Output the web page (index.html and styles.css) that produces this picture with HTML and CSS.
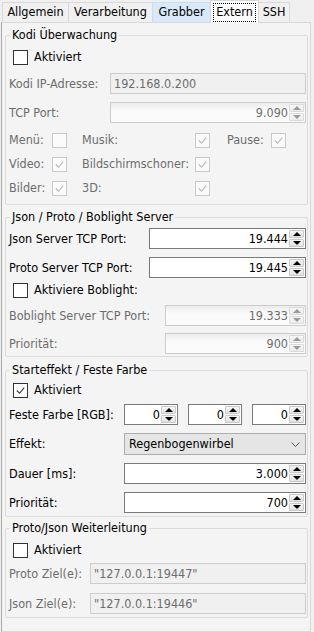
FILE: index.html
```html
<!DOCTYPE html>
<html>
<head>
<meta charset="utf-8">
<link rel="stylesheet" href="styles.css">
</head>
<body>
<div class="tabs">
  <div class="tab tw1">Allgemein</div>
  <div class="tab tw2">Verarbeitung</div>
  <div class="tab tw3 hover">Grabber</div>
  <div class="tab tw4 active"><span class="focus">Extern</span></div>
  <div class="tab tw5">SSH</div>
</div>
<div class="pane">
  <fieldset class="group g1">
    <legend>Kodi Überwachung</legend>
    <div class="check c1"><span class="box"></span><span>Aktiviert</span></div>
    <div class="row m5"><span class="lbl dis w101">Kodi IP-Adresse:</span><span class="edit dis">192.168.0.200</span></div>
    <div class="row m8"><span class="lbl dis w101">TCP Port:</span>
      <span class="spin dis"><span class="val">9.090</span><span class="btns"><span class="btn up"></span><span class="btn down"></span></span></span></div>
    <div class="cbgrid">
      <span class="dis">Menü:</span><span class="box dbox"></span>
      <span class="dis">Musik:</span><span class="box dbox"><svg viewBox="0 0 14 14"><polyline points="3,7 6,10 11,4"/></svg></span>
      <span class="dis">Pause:</span><span class="box dbox"><svg viewBox="0 0 14 14"><polyline points="3,7 6,10 11,4"/></svg></span>
      <span class="dis">Video:</span><span class="box dbox"><svg viewBox="0 0 14 14"><polyline points="3,7 6,10 11,4"/></svg></span>
      <span class="dis">Bildschirmschoner:</span><span class="box dbox"><svg viewBox="0 0 14 14"><polyline points="3,7 6,10 11,4"/></svg></span>
      <span></span><span></span>
      <span class="dis">Bilder:</span><span class="box dbox"><svg viewBox="0 0 14 14"><polyline points="3,7 6,10 11,4"/></svg></span>
      <span class="dis">3D:</span><span class="box dbox"><svg viewBox="0 0 14 14"><polyline points="3,7 6,10 11,4"/></svg></span>
    </div>
  </fieldset>

  <fieldset class="group g2">
    <legend>Json / Proto / Boblight Server</legend>
    <div class="row m4"><span class="lbl w140">Json Server TCP Port:</span>
      <span class="spin"><span class="val">19.444</span><span class="btns"><span class="btn up"></span><span class="btn down"></span></span></span></div>
    <div class="row m8"><span class="lbl w140">Proto Server TCP Port:</span>
      <span class="spin"><span class="val">19.445</span><span class="btns"><span class="btn up"></span><span class="btn down"></span></span></span></div>
    <div class="check c2"><span class="box"></span><span>Aktiviere Boblight:</span></div>
    <div class="row m4"><span class="lbl dis w156">Boblight Server TCP Port:</span>
      <span class="spin dis"><span class="val">19.333</span><span class="btns"><span class="btn up"></span><span class="btn down"></span></span></span></div>
    <div class="row m7"><span class="lbl dis w156">Priorität:</span>
      <span class="spin dis"><span class="val">900</span><span class="btns"><span class="btn up"></span><span class="btn down"></span></span></span></div>
  </fieldset>

  <fieldset class="group g3">
    <legend>Starteffekt / Feste Farbe</legend>
    <div class="check c3"><span class="box"><svg viewBox="0 0 14 14"><polyline points="3,7 6,10 11,4"/></svg></span><span>Aktiviert</span></div>
    <div class="row m3"><span class="lbl w115">Feste Farbe [RGB]:</span>
      <div class="rgb">
        <span class="spin"><span class="val">0</span><span class="btns"><span class="btn up"></span><span class="btn down"></span></span></span>
        <span class="spin"><span class="val">0</span><span class="btns"><span class="btn up"></span><span class="btn down"></span></span></span>
        <span class="spin"><span class="val">0</span><span class="btns"><span class="btn up"></span><span class="btn down"></span></span></span>
      </div>
    </div>
    <div class="row m8 tall"><span class="lbl w115">Effekt:</span>
      <span class="combo"><span>Regenbogenwirbel</span><svg class="chev" viewBox="0 0 9 5"><polyline points="0.5,0.5 4.5,4.5 8.5,0.5"/></svg></span></div>
    <div class="row m8"><span class="lbl w115">Dauer [ms]:</span>
      <span class="spin"><span class="val">3.000</span><span class="btns"><span class="btn up"></span><span class="btn down"></span></span></span></div>
    <div class="row m8"><span class="lbl w115">Priorität:</span>
      <span class="spin"><span class="val">700</span><span class="btns"><span class="btn up"></span><span class="btn down"></span></span></span></div>
  </fieldset>

  <fieldset class="group g4">
    <legend>Proto/Json Weiterleitung</legend>
    <div class="check c4"><span class="box"></span><span>Aktiviert</span></div>
    <div class="row m2"><span class="lbl dis w81">Proto Ziel(e):</span><span class="edit dis">"127.0.0.1:19447"</span></div>
    <div class="row m9"><span class="lbl dis w81">Json Ziel(e):</span><span class="edit dis">"127.0.0.1:19446"</span></div>
  </fieldset>
</div>
</body>
</html>
```

FILE: styles.css
```css
* { box-sizing: border-box; }
html, body { margin: 0; }
body {
  width: 314px;
  height: 632px;
  overflow: hidden;
  background: #f0f0f0;
  font-family: "DejaVu Sans Condensed", "DejaVu Sans", sans-serif;
  font-size: 12.5px;
  line-height: 14px;
  color: #000;
}

/* tabs */
.tabs {
  display: flex;
  align-items: flex-end;
  height: 22px;
  padding-left: 2px;
  position: relative;
  z-index: 1;
}
.tab {
  height: 20px;
  border: 1px solid #d9d9d9;
  border-bottom: 0;
  margin-left: -1px;
  padding-top: 2px;
  text-align: center;
  background: #f0f0f0;
  white-space: nowrap;
  flex: none;
}
.tab:first-child { margin-left: 0; }
.tw1 { width: 67px; }
.tw2 { width: 85px; }
.tw3 { width: 59px; }
.tw4 { width: 49px; }
.tw5 { width: 32px; }
.tab.hover { background: #d8eaf9; border-color: #c9def2; }
.tab.active {
  height: 23px;
  margin-bottom: -1px;
  padding: 2px 2px 0;
  background: #fff;
  border-color: #d9d9d9;
}
.focus {
  display: block;
  height: 19px;
  padding-top: 1px;
  border: 1px dotted #000;
}

/* pane */
.pane {
  margin-left: 1px;
  width: 310px;
  height: 610px;
  border: 1px solid #d9d9d9;
  border-left-color: #a9a9a9;
  background: #f4f4f4;
  padding: 5px 2px 0 3px;
}

.group {
  margin: 0;
  border: 1px solid #dcdcdc;
  border-radius: 2px;
  padding: 0 1px 0 3px;
  min-width: 0;
}
.group legend {
  padding: 0 2px;
  margin-left: 1px;
  line-height: 14px;
}
.g1 { padding-bottom: 4px; }
.g2 { margin-top: 5px; padding-bottom: 2px; }
.g3 { margin-top: 6px; padding-bottom: 3px; }
.g4 { margin-top: 4px; padding-bottom: 3px; }

/* checkboxes */
.check {
  display: flex;
  align-items: center;
  height: 22px;
  padding-left: 4px;
  gap: 6px;
}
.c1 { margin-top: 4px; }
.c2 { margin-top: 1px; }
.c3 { margin-top: 2px; }
.c4 { margin-top: 4px; }
.box {
  display: block;
  width: 15px;
  height: 15px;
  border: 1px solid #333;
  background: #fff;
  flex: none;
}
.box svg { display: block; width: 13px; height: 13px; }
.box polyline { fill: none; stroke: #333; stroke-width: 1.2; }
.dbox { border-color: #c8c8c8; background: #fbfbfb; }
.dbox polyline { stroke: #b8b8b8; }

/* rows */
.row {
  display: flex;
  align-items: center;
  height: 21px;
}
.row.tall { height: 22px; }
.m2 { margin-top: 2px; }
.m3 { margin-top: 3px; }
.m4 { margin-top: 4px; }
.m5 { margin-top: 5px; }
.m7 { margin-top: 7px; }
.m8 { margin-top: 8px; }
.m9 { margin-top: 9px; }
.lbl { flex: none; white-space: nowrap; }
.w81 { width: 81px; }
.w101 { width: 101px; }
.w115 { width: 115px; }
.w140 { width: 140px; }
.w156 { width: 156px; }
.dis { color: #6d6d6d; }

.edit {
  flex: 1;
  height: 100%;
  display: flex;
  align-items: center;
  padding-left: 3px;
  border: 1px solid #7a7a7a;
  background: #fff;
}
.edit.dis { border-color: #cccccc; background: #f0f0f0; }

.spin {
  flex: 1;
  height: 100%;
  display: flex;
  align-items: center;
  border: 1px solid #7a7a7a;
  background: #fff;
  padding: 1px;
  min-width: 0;
}
.spin .val { flex: 1; text-align: right; padding-right: 1px; }
.spin.dis { border-color: #cccccc; background: linear-gradient(#ececec, #fbfbfb 40%); }
.btns {
  flex: none;
  width: 15px;
  height: 100%;
  display: flex;
  flex-direction: column;
  gap: 1px;
}
.btn {
  flex: 1;
  display: flex;
  align-items: center;
  justify-content: center;
  border: 1px solid #c9c9c9;
  border-radius: 1px;
  background: linear-gradient(#f4f4f4, #e3e3e3);
}
.btn::after {
  content: "";
  border-left: 4px solid transparent;
  border-right: 4px solid transparent;
}
.btn.up::after { border-bottom: 4px solid #000; }
.btn.down::after { border-top: 4px solid #000; }
.spin.dis .btn { border-color: #dadada; background: linear-gradient(#f6f6f6, #ececec); }
.spin.dis .btn.up::after { border-bottom-color: #9a9a9a; }
.spin.dis .btn.down::after { border-top-color: #9a9a9a; }

.rgb {
  flex: 1;
  display: flex;
  gap: 10px;
  height: 100%;
}

.combo {
  flex: 1;
  height: 100%;
  display: flex;
  align-items: center;
  justify-content: space-between;
  padding: 0 5px 0 4px;
  border: 1px solid #adadad;
  background: #e5e5e5;
}
.chev { width: 9px; height: 5px; }
.chev polyline { fill: none; stroke: #555; stroke-width: 1; }

/* checkbox grid */
.cbgrid {
  display: grid;
  grid-template-columns: 43px 30px 113px 32px 44px 14px;
  grid-auto-rows: 24px;
  align-items: center;
  margin-top: 5px;
  white-space: nowrap;
}
```
